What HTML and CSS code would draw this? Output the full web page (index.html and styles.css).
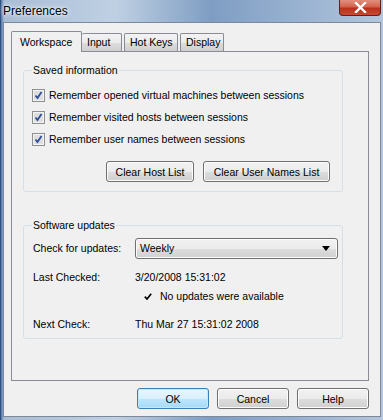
FILE: index.html
```html
<!DOCTYPE html>
<html lang="en">
<head>
    <meta charset="UTF-8">
    <title>Preferences</title>
    <link rel="stylesheet" href="styles.css">
</head>
<body>
    <div class="window">
        <div class="titlebar">
            <span class="title">Preferences</span>
            <span class="close">
                <svg width="13" height="11" viewBox="0 0 13 11"><path d="M2 1 L11 10 M11 1 L2 10" stroke="#fff" stroke-width="2.4" stroke-linecap="square"/></svg>
            </span>
        </div>

        <div class="client">
            <div class="tabs">
                <div class="tab active tab-workspace">Workspace</div>
                <div class="tab tab-input">Input</div>
                <div class="tab tab-hotkeys">Hot Keys</div>
                <div class="tab tab-display">Display</div>
            </div>

            <div class="panel">
                <fieldset class="group saved">
                    <legend>Saved information</legend>
                    <label class="check">
                        <svg class="box" width="13" height="13" viewBox="0 0 13 13"><rect x="0.5" y="0.5" width="12" height="12" fill="#f4f4f4" stroke="#8e8f8f"/><rect x="2" y="2" width="9" height="9" fill="#dedede"/><path d="M3.5 6.5 L5.5 9 L9.5 3" fill="none" stroke="#2b4e9a" stroke-width="1.8"/></svg>
                        Remember opened virtual machines between sessions
                    </label>
                    <label class="check">
                        <svg class="box" width="13" height="13" viewBox="0 0 13 13"><rect x="0.5" y="0.5" width="12" height="12" fill="#f4f4f4" stroke="#8e8f8f"/><rect x="2" y="2" width="9" height="9" fill="#dedede"/><path d="M3.5 6.5 L5.5 9 L9.5 3" fill="none" stroke="#2b4e9a" stroke-width="1.8"/></svg>
                        Remember visited hosts between sessions
                    </label>
                    <label class="check">
                        <svg class="box" width="13" height="13" viewBox="0 0 13 13"><rect x="0.5" y="0.5" width="12" height="12" fill="#f4f4f4" stroke="#8e8f8f"/><rect x="2" y="2" width="9" height="9" fill="#dedede"/><path d="M3.5 6.5 L5.5 9 L9.5 3" fill="none" stroke="#2b4e9a" stroke-width="1.8"/></svg>
                        Remember user names between sessions
                    </label>
                    <div class="group-buttons">
                        <button class="btn host">Clear Host List</button>
                        <button class="btn users">Clear User Names List</button>
                    </div>
                </fieldset>

                <fieldset class="group updates">
                    <legend>Software updates</legend>
                    <div class="row first">
                        <span class="label">Check for updates:</span>
                        <div class="combo">
                            <span>Weekly</span>
                            <svg width="8" height="5" viewBox="0 0 8 5"><path d="M0 0 H8 L4 5 Z" fill="#000"/></svg>
                        </div>
                    </div>
                    <div class="row">
                        <span class="label">Last Checked:</span>
                        <span>3/20/2008 15:31:02</span>
                    </div>
                    <div class="row status">
                        <svg width="8" height="7" viewBox="0 0 8 7"><path d="M0.8 3.6 L3 6 L7.2 0.8" fill="none" stroke="#000" stroke-width="1.7"/></svg>
                        <span>No updates were available</span>
                    </div>
                    <div class="row next">
                        <span class="label">Next Check:</span>
                        <span>Thu Mar 27 15:31:02 2008</span>
                    </div>
                </fieldset>
            </div>

            <div class="dialog-buttons">
                <button class="btn default">OK</button>
                <button class="btn">Cancel</button>
                <button class="btn">Help</button>
            </div>
        </div>
    </div>
</body>
</html>
```

FILE: styles.css
```css
body {
    margin: 0;
    font-family: "Liberation Sans", Arial, sans-serif;
    font-size: 10.5px;
}
.window {
    width: 383px;
    height: 420px;
    box-sizing: border-box;
    background: linear-gradient(to right, #4f74a8 0px, #a9bdd5 3px, #bfd0e3 30%, #7f9dc3 55%, #95afcf 75%, #b3c6dc 100%);
    border-left: 1px solid #2f4f7f;
    display: flex;
    flex-direction: column;
}
.titlebar {
    height: 22px;
    display: flex;
    align-items: flex-start;
    justify-content: space-between;
}
.title {
    font-size: 12px;
    margin: 4px 0 0 2px;
    color: #000;
    text-shadow: 0 0 6px #fff, 0 0 3px #fff;
}
.close {
    width: 42px;
    height: 16px;
    margin-right: 2px;
    box-sizing: border-box;
    border: 1px solid #5d2219;
    border-top: none;
    border-radius: 0 0 4px 4px;
    background: linear-gradient(#e2907f, #d2634c 45%, #b8311b 55%, #c94a2f);
    display: flex;
    align-items: center;
    justify-content: center;
}
.client {
    height: 395px;
    margin: 0 2px 0 2px;
    box-sizing: border-box;
    border: 1px solid #7d8898;
    background: #f0f0f0;
    padding: 8px 11px 7px 7px;
    display: flex;
    flex-direction: column;
}
.tabs {
    display: flex;
    align-items: flex-end;
    height: 20px;
}
.tab {
    height: 18px;
    box-sizing: border-box;
    border: 1px solid #898c95;
    border-bottom: none;
    border-radius: 2px 2px 0 0;
    background: linear-gradient(#f3f3f3, #ebebeb 50%, #dddddd 51%, #cfcfcf);
    padding: 2px 0 0 5px;
    margin-left: 2px;
    white-space: nowrap;
}
.tab.active {
    height: 21px;
    margin: 0 0 -1px 0;
    padding: 4px 0 0 8px;
    background: #f0f0f0;
    position: relative;
    z-index: 1;
}
.tab.active + .tab {
    margin-left: 0;
    border-left: none;
}
.tab-workspace {
    width: 71px;
}
.tab-input {
    width: 40px;
}
.tab-hotkeys {
    width: 54px;
}
.tab-display {
    width: 44px;
}
.panel {
    height: 330px;
    box-sizing: border-box;
    border: 1px solid #898c95;
    padding: 12px 0 0 11px;
}
.group {
    width: 320px;
    box-sizing: border-box;
    margin: 0;
    border: 1px solid #d5dfe5;
    border-radius: 3px;
}
.group legend {
    padding: 0 1px;
    margin-left: 0;
    line-height: 13px;
}
.saved {
    padding: 7px 12px 9px 8px;
}
.check {
    height: 22px;
    display: flex;
    align-items: center;
    gap: 4px;
}
.group-buttons {
    display: flex;
    justify-content: flex-end;
    gap: 9px;
    margin-top: 11px;
}
.btn {
    height: 21px;
    box-sizing: border-box;
    border: 1px solid #707070;
    border-radius: 3px;
    background: linear-gradient(#f2f2f2, #ebebeb 50%, #dddddd 51%, #cfcfcf);
    box-shadow: inset 0 0 0 1px #fcfcfc;
    font-family: inherit;
    font-size: 10.5px;
    color: #000;
    padding: 0;
}
.btn.host {
    width: 88px;
}
.btn.users {
    width: 127px;
}
.updates {
    margin-top: 27px;
    padding: 6px 3px 7px 9px;
}
.updates legend {
    margin-left: -1px;
}
.row {
    display: flex;
    align-items: center;
    height: 13px;
    line-height: 13px;
}
.row.first {
    height: 21px;
}
.row + .row {
    margin-top: 12px;
}
.row.status {
    margin-top: 6px;
    padding-left: 111px;
    gap: 8px;
}
.row.next {
    margin-top: 15px;
}
.label {
    width: 102px;
    flex: none;
}
.combo {
    width: 203px;
    height: 21px;
    box-sizing: border-box;
    border: 1px solid #707070;
    border-radius: 3px;
    background: linear-gradient(#f2f2f2, #ebebeb 50%, #dddddd 51%, #cfcfcf);
    box-shadow: inset 0 0 0 1px #fcfcfc;
    display: flex;
    align-items: center;
    justify-content: space-between;
    padding: 0 7px 0 4px;
}
.dialog-buttons {
    display: flex;
    justify-content: flex-end;
    gap: 8px;
    margin-top: 7px;
}
.dialog-buttons .btn {
    width: 72px;
}
.btn.default {
    border-color: #3c7fb1;
    background: linear-gradient(#eaf6fd, #d9f0fc 50%, #bee6fd 51%, #a7d9f5);
    box-shadow: inset 0 0 0 1px #c5e7fa;
}
```
